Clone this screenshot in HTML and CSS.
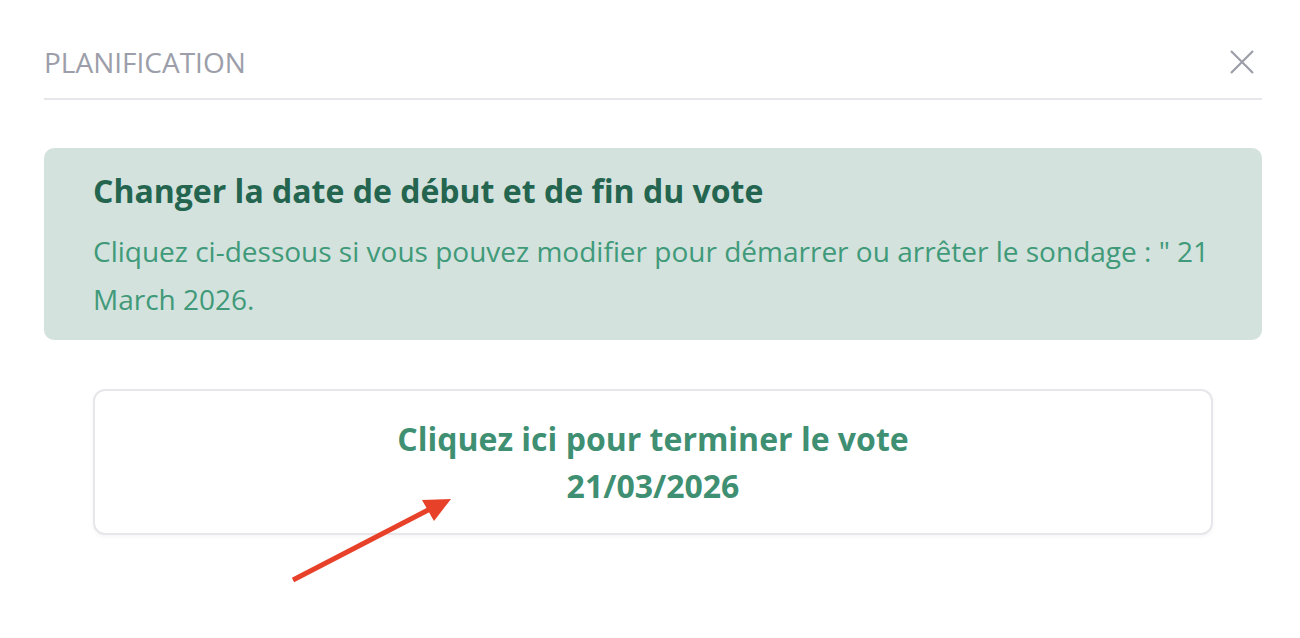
FILE: index.html
```html
<!DOCTYPE html>
<html lang="fr">
<head>
<meta charset="utf-8">
<title>Planification</title>
<link rel="stylesheet" href="styles.css">
</head>
<body>
<div class="modal">
  <div class="modal-header">
    <h1 class="modal-title">PLANIFICATION</h1>
    <button class="close-btn" aria-label="Fermer">
      <svg width="24" height="24" viewBox="0 0 24 24"><path d="M1 1 L23 23 M23 1 L1 23" stroke="#9b9da8" stroke-width="2.2" fill="none"/></svg>
    </button>
  </div>
  <div class="alert">
    <h2 class="alert-title">Changer la date de début et de fin du vote</h2>
    <p class="alert-text">Cliquez ci-dessous si vous pouvez modifier pour démarrer ou arrêter le sondage : " 21 March 2026.</p>
  </div>
  <button class="action">Cliquez ici pour terminer le vote<br>21/03/2026</button>
</div>
<svg class="pointer" width="1300" height="638" viewBox="0 0 1300 638">
  <line x1="293" y1="580" x2="432" y2="508" stroke="#e8412a" stroke-width="5"/>
  <polygon points="451,499 422,500 434,521" fill="#e8412a"/>
</svg>
</body>
</html>
```
FILE: styles.css
```css
html, body {
  margin: 0;
  padding: 0;
  background: #ffffff;
}
body {
  font-family: "Open Sans", "Noto Sans", sans-serif;
  width: 1300px;
  height: 638px;
  position: relative;
  overflow: hidden;
}
.modal {
  padding: 43px 38px 0 44px;
}
.modal-header {
  display: flex;
  justify-content: space-between;
  align-items: center;
  padding-bottom: 17px;
  border-bottom: 2px solid #e6e6eb;
}
.modal-title {
  margin: 0;
  font-size: 28px;
  line-height: 38px;
  font-weight: 400;
  color: #9c9ea9;
}
.close-btn {
  background: none;
  border: 0;
  padding: 0;
  margin-right: 8px;
  display: flex;
}
.alert {
  margin-top: 48px;
  background: #d3e2dd;
  border-radius: 10px;
  padding: 23px 40px 17px 49px;
}
.alert-title {
  margin: 0;
  font-size: 32px;
  line-height: 40px;
  font-weight: 700;
  color: #246550;
}
.alert-text {
  margin: 16px 0 0;
  font-size: 28px;
  line-height: 48px;
  color: #409a79;
}
.action {
  display: block;
  box-sizing: border-box;
  width: calc(100% - 98px);
  margin: 49px 49px 0;
  padding: 24px 20px 24px;
  background: #ffffff;
  border: 2px solid #e6e6eb;
  border-radius: 12px;
  box-shadow: 0 2px 4px rgba(0, 0, 0, 0.04);
  font-family: inherit;
  font-size: 32px;
  line-height: 47px;
  font-weight: 700;
  color: #3f8f73;
  text-align: center;
}
.pointer {
  position: absolute;
  left: 0;
  top: 0;
  pointer-events: none;
}
```
